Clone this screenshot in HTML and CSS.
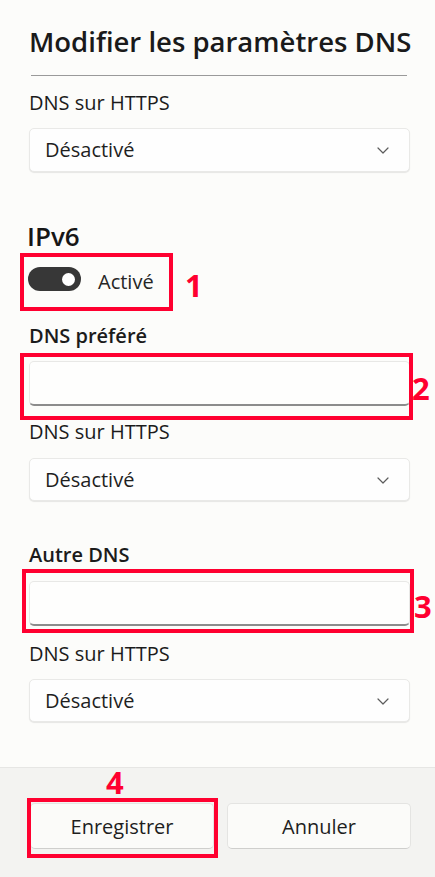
FILE: index.html
```html
<!DOCTYPE html>
<html lang="fr">
<head>
<meta charset="utf-8">
<title>Modifier les paramètres DNS</title>
<link rel="stylesheet" href="styles.css">
</head>
<body>
<div class="dialog">
  <div class="content">
    <h1 class="title">Modifier les paramètres DNS</h1>
    <hr class="divider">
    <div class="label label-first">DNS sur HTTPS</div>
    <div class="select select-first">
      <span class="select-text">Désactivé</span>
      <svg class="chev" width="12" height="7" viewBox="0 0 12 7"><polyline points="1,1 6,6 11,1" fill="none" stroke="#5c5c5c" stroke-width="1.2" stroke-linecap="round" stroke-linejoin="round"/></svg>
    </div>

    <h2 class="section">IPv6</h2>
    <div class="toggle-row">
      <span class="toggle"><span class="knob"></span></span>
      <span class="toggle-label">Activé</span>
      <span class="ann ann-1"></span>
      <span class="num num-1">1</span>
    </div>

    <div class="label strong label-pref">DNS préféré</div>
    <div class="field field-pref">
      <input class="textbox" type="text" aria-label="DNS préféré">
      <span class="ann ann-2"></span>
      <span class="num num-2">2</span>
    </div>
    <div class="label label-after">DNS sur HTTPS</div>
    <div class="select select-after">
      <span class="select-text">Désactivé</span>
      <svg class="chev" width="12" height="7" viewBox="0 0 12 7"><polyline points="1,1 6,6 11,1" fill="none" stroke="#5c5c5c" stroke-width="1.2" stroke-linecap="round" stroke-linejoin="round"/></svg>
    </div>

    <div class="label strong label-alt">Autre DNS</div>
    <div class="field field-alt">
      <input class="textbox" type="text" aria-label="Autre DNS">
      <span class="ann ann-3"></span>
      <span class="num num-3">3</span>
    </div>
    <div class="label label-after2">DNS sur HTTPS</div>
    <div class="select select-after2">
      <span class="select-text">Désactivé</span>
      <svg class="chev" width="12" height="7" viewBox="0 0 12 7"><polyline points="1,1 6,6 11,1" fill="none" stroke="#5c5c5c" stroke-width="1.2" stroke-linecap="round" stroke-linejoin="round"/></svg>
    </div>
  </div>

  <div class="footer">
    <span class="num num-4">4</span>
    <div class="btn-wrap">
      <button class="btn" type="button">Enregistrer</button>
      <span class="ann ann-4"></span>
    </div>
    <div class="btn-wrap">
      <button class="btn" type="button">Annuler</button>
    </div>
  </div>
</div>
</body>
</html>
```

FILE: styles.css
```css
* { box-sizing: border-box; }

html, body {
  margin: 0;
  padding: 0;
}

body {
  background: #fcfcfa;
  font-family: "Open Sans", "Noto Sans", sans-serif;
  color: #1b1b1b;
  width: 435px;
  height: 877px;
  overflow: hidden;
}

.dialog {
  display: flex;
  flex-direction: column;
  height: 877px;
}

.content {
  display: flex;
  flex-direction: column;
  padding: 24px 25px 0 29px;
  flex: 1;
}

.title {
  margin: 0;
  font-size: 27.5px;
  line-height: 36px;
  font-weight: 600;
  color: #1a1a1a;
  white-space: nowrap;
}

.divider {
  margin: 15px 3px 0 2px;
  border: 0;
  height: 1px;
  background: #9a9a9a;
}

.label {
  font-size: 20px;
  line-height: 28px;
  font-weight: 400;
  color: #1b1b1b;
}

.label.strong { font-weight: 600; }

.label-first { margin-top: 13px; }
.label-pref { margin-top: 31px; }
.label-after { margin-top: 12px; }
.label-alt { margin-top: 40px; }
.label-after2 { margin-top: 14px; }

.select {
  display: flex;
  align-items: center;
  justify-content: space-between;
  height: 43px;
  padding: 0 20px 0 15px;
  background: #fefefe;
  border: 1px solid #e9e9e7;
  border-radius: 5px;
  box-shadow: 0 1px 1px rgba(0, 0, 0, 0.09);
}

.select-first { margin-top: 11px; height: 44px; }
.select-after { margin-top: 12px; }
.select-after2 { margin-top: 11px; }

.select-text {
  font-size: 20px;
  line-height: 28px;
  color: #1f1f1f;
}

.chev { display: block; margin-top: 1px; }

.section {
  margin: 47px 0 0 -2px;
  font-size: 26px;
  line-height: 34px;
  font-weight: 600;
  color: #161616;
}

.toggle-row {
  position: relative;
  display: flex;
  align-items: center;
  gap: 17px;
  margin-top: 14px;
  height: 24px;
}

.toggle {
  position: relative;
  width: 53px;
  height: 24px;
  margin-left: -1px;
  border-radius: 12px;
  background: #373737;
  display: flex;
  align-items: center;
  justify-content: flex-end;
  padding-right: 6px;
}

.knob {
  width: 13px;
  height: 13px;
  border-radius: 50%;
  background: #ffffff;
}

.toggle-label {
  font-size: 20px;
  line-height: 28px;
  color: #262626;
  padding-top: 5px;
}

.field {
  position: relative;
  display: flex;
}

.field-pref { margin-top: 11px; }
.field-alt { margin-top: 12px; }

.textbox {
  width: 100%;
  height: 45px;
  margin: 0;
  padding: 0 12px;
  background: #fefefd;
  border: 1px solid #e8e8e6;
  border-bottom: 2px solid #8c8c8c;
  border-radius: 5px;
  font-family: inherit;
  font-size: 20px;
  outline: none;
}

.ann {
  position: absolute;
  border: 4px solid #ff0030;
  pointer-events: none;
}

.num {
  position: absolute;
  font-family: "Open Sans", "Noto Sans", sans-serif;
  font-weight: 700;
  font-size: 31px;
  line-height: 31px;
  color: #ff0030;
}

.ann-1 { left: -9px; top: -14px; width: 153px; height: 58px; }
.num-1 { left: 156px; top: 3px; }

.ann-2 { left: -9px; top: -8px; width: 393px; height: 67px; }
.num-2 { left: 383px; top: 12px; }

.ann-3 { left: -7px; top: -12px; width: 392px; height: 64px; }
.num-3 { left: 385px; top: 10px; }

.footer {
  position: relative;
  display: grid;
  grid-template-columns: 1fr 1fr;
  column-gap: 13px;
  height: 110px;
  padding: 35px 24px 0 30px;
  background: #f3f3f1;
  border-top: 1px solid #e6e6e4;
}

.num-4 { left: 106px; top: -1px; }

.btn-wrap {
  position: relative;
  height: 46px;
}

.btn {
  width: 100%;
  height: 46px;
  margin: 0;
  background: #fbfbf9;
  border: 1px solid #e4e4e2;
  border-bottom-color: #cfcfcd;
  border-radius: 5px;
  font-family: "Open Sans", "Noto Sans", sans-serif;
  font-size: 20px;
  color: #1e1e1e;
  padding: 0;
}

.ann-4 { left: -3px; top: -5px; width: 191px; height: 60px; }
```
